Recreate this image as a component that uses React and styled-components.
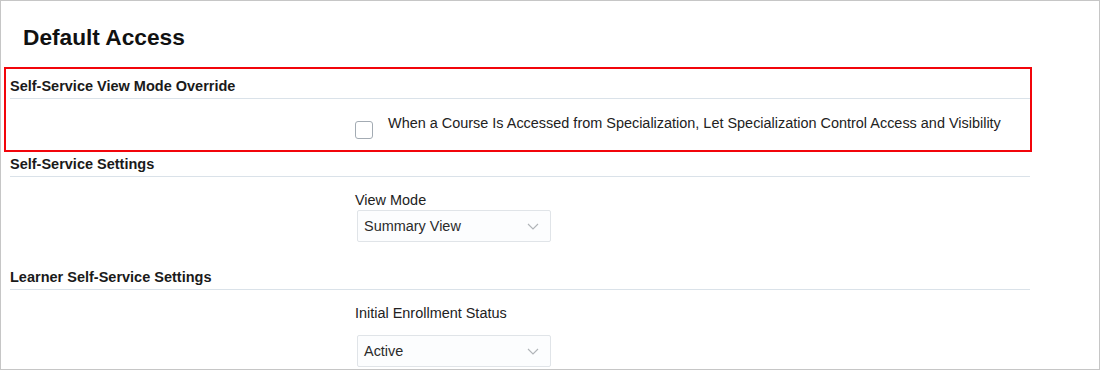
import styled, { createGlobalStyle } from "styled-components";

const GlobalStyle = createGlobalStyle`
  html, body {
    margin: 0;
    padding: 0;
    background: #ffffff;
  }
  body {
    font-family: "Liberation Sans", Arial, Helvetica, sans-serif;
    color: #1f1f1f;
  }
`;

const sections = [
  {
    title: "Self-Service View Mode Override",
    highlight: true,
    kind: "checkbox",
    label:
      "When a Course Is Accessed from Specialization, Let Specialization Control Access and Visibility",
  },
  {
    title: "Self-Service Settings",
    kind: "select",
    label: "View Mode",
    value: "Summary View",
    gap: "1px",
  },
  {
    title: "Learner Self-Service Settings",
    kind: "select",
    label: "Initial Enrollment Status",
    value: "Active",
    gap: "13px",
  },
];

const Chevron = () => (
  <svg width="12" height="7" viewBox="0 0 12 7" fill="none">
    <path d="M1 1l5 5 5-5" stroke="#b0b4b8" strokeWidth="1.1" />
  </svg>
);

const Field = ({ section }) => {
  if (section.kind === "checkbox") {
    return (
      <CheckRow>
        <Checkbox />
        <CheckLabel>{section.label}</CheckLabel>
      </CheckRow>
    );
  }
  return (
    <FieldStack>
      <FieldLabel>{section.label}</FieldLabel>
      <Select $gap={section.gap}>
        <span>{section.value}</span>
        <Chevron />
      </Select>
    </FieldStack>
  );
};

export default function App() {
  return (
    <>
      <GlobalStyle />
      <Frame>
        <Title>Default Access</Title>
        {sections.map((section, i) => {
          const body = (
            <Section key={i} $first={i === 0} $after={sections[i - 1]?.kind}>
              <SectionHead>{section.title}</SectionHead>
              <SectionBody>
                <Spacer />
                <Field section={section} />
              </SectionBody>
            </Section>
          );
          return section.highlight ? (
            <Highlight key={i}>{body}</Highlight>
          ) : (
            body
          );
        })}
      </Frame>
    </>
  );
}

const Frame = styled.div`
  box-sizing: border-box;
  width: 1100px;
  height: 370px;
  border: 1px solid #c6c6c6;
  padding: 0 0 0 9px;
  overflow: hidden;
`;

const Title = styled.h1`
  margin: 23px 0 0 13px;
  font-size: 22.7px;
  line-height: 26px;
  font-weight: 700;
  color: #111;
`;

const Highlight = styled.div`
  box-sizing: border-box;
  width: 1028px;
  margin: 17px 0 0 -6px;
  padding: 8px 0 11px 4px;
  border: 2px solid #f2050b;
`;

const Section = styled.section`
  width: 1020px;
  margin-top: ${({ $first, $after }) =>
    $first ? "0" : $after === "checkbox" ? "3px" : "26px"};
`;

const SectionHead = styled.div`
  font-size: 14.5px;
  line-height: 18px;
  font-weight: 700;
  color: #1a1a1a;
  padding-bottom: 3px;
  border-bottom: 1px solid #dae2e9;
`;

const SectionBody = styled.div`
  display: grid;
  grid-template-columns: 345px 1fr;
  padding-top: 14px;
`;

const Spacer = styled.div``;

const CheckRow = styled.div`
  display: flex;
  align-items: flex-start;
  gap: 15px;
  padding-top: 1px;
`;

const Checkbox = styled.span`
  box-sizing: border-box;
  flex: none;
  width: 18px;
  height: 18px;
  margin-top: 7px;
  border: 1px solid #a3abb3;
  border-radius: 3px;
  background: #fff;
`;

const CheckLabel = styled.span`
  font-size: 14.45px;
  line-height: 18px;
  color: #222;
`;

const FieldStack = styled.div`
  display: flex;
  flex-direction: column;
  align-items: flex-start;
`;

const FieldLabel = styled.label`
  font-size: 14.45px;
  line-height: 18px;
  color: #222;
`;

const Select = styled.div`
  box-sizing: border-box;
  display: flex;
  align-items: center;
  justify-content: space-between;
  width: 194px;
  height: 32px;
  margin: ${({ $gap }) => $gap} 0 0 2px;
  padding: 0 11px 0 6px;
  border: 1px solid #e0e4e8;
  border-radius: 2px;
  background: #fcfdfe;
  font-size: 14.45px;
  color: #2b2b2b;
`;
